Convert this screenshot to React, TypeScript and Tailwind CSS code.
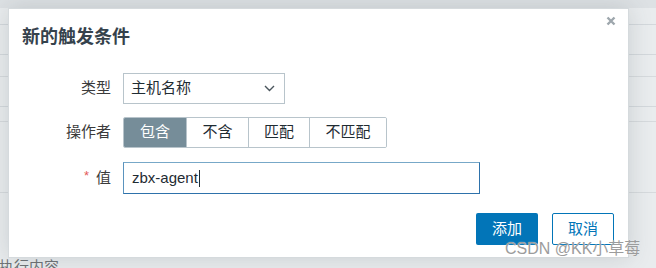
import React from "react";

const font = "font-['Liberation_Sans','Noto_Sans_CJK_SC',sans-serif]";

export default function App() {
  const segs = [
    { t: "包含", w: "w-[62px]", active: true },
    { t: "不含", w: "w-[62px]", active: false },
    { t: "匹配", w: "w-[61px]", active: false },
    { t: "不匹配", w: "w-[77px]", active: false },
  ];
  return (
    <div className={`relative w-[656px] h-[268px] overflow-hidden bg-[#e9ecee] ${font}`}>
      {/* background page (dimmed) */}
      <div className="flex flex-col">
        <div className="h-[8px] bg-[#dde1e4]" />
        <div className="h-[17px] border-b border-[#d3d8dc]" />
        <div className="h-[30px] border-b border-[#d3d8dc]" />
        <div className="h-[22px] border-b border-[#d6dadd]" />
        <div className="h-[30px] border-b border-[#d3d8dc]" />
        <div className="h-[15px] border-b border-[#d6dadd]" />
        <div className="h-[71px] border-b border-[#d6dadd]" />
        <div className="h-[64px]" />
        <div className="-ml-[1px] text-[15px] leading-[20px] text-[#6e7275]">执行内容</div>
      </div>

      {/* dialog */}
      <div className="absolute left-[8px] top-[8px] w-[621px] h-[250px] bg-white border border-[#d5dadd] shadow-[0_0_22px_rgba(60,70,80,0.18)] px-[13px] pt-[16px]">
        <button className="absolute right-[12px] top-[7px] w-[10px] h-[10px] flex items-center justify-center">
          <svg width="10" height="10" viewBox="0 0 10 10">
            <path d="M1.5 1.5 L8.5 8.5 M8.5 1.5 L1.5 8.5" stroke="#9ea7ad" strokeWidth="2.4" />
          </svg>
        </button>

        <div className="text-[18px] leading-[24px] font-bold text-[#35424c]">新的触发条件</div>

        <div className="mt-[24px] flex flex-col gap-[13px]">
          <div className="flex items-center gap-[12px] h-[31px]">
            <div className="w-[89px] text-right text-[15px] text-[#3b3b3b]">类型</div>
            <div className="w-[162px] h-[31px] border border-[#b8c4cb] flex items-center justify-between pl-[7px] pr-[9px] text-[15px] text-[#1f2c33]">
              <span>主机名称</span>
              <svg width="11" height="7" viewBox="0 0 11 7">
                <path d="M1 1 L5.5 5.5 L10 1" fill="none" stroke="#4a555c" strokeWidth="1.4" />
              </svg>
            </div>
          </div>

          <div className="flex items-center gap-[12px] h-[31px]">
            <div className="w-[89px] text-right text-[15px] text-[#3b3b3b]">操作者</div>
            <div className="flex h-[31px] rounded-[2px] border border-[#b8c4cb] overflow-hidden">
              {segs.map((s, i) => (
                <div
                  key={s.t}
                  className={`${s.w} flex items-center justify-center text-[15px] ${
                    s.active ? "bg-[#768d99] text-white" : "bg-white text-[#1f2c33]"
                  } ${i > 0 ? "border-l border-[#b8c4cb]" : ""}`}
                >
                  {s.t}
                </div>
              ))}
            </div>
          </div>

          <div className="flex items-center gap-[12px] h-[32px] mt-[1px]">
            <div className="w-[89px] flex justify-end items-center text-[15px] text-[#3b3b3b]">
              <span className="text-[#e45959] text-[13px] leading-none relative -top-[3px] mr-[7px]">*</span>
              <span>值</span>
            </div>
            <div className="w-[357px] h-[32px] border border-[#2e72ab] border-t-[#77a8c8] border-l-[#5a93be] flex items-center pl-[8px] text-[15px] text-[#1f2c33]">
              <span>zbx-agent</span>
              <span className="w-[1px] h-[17px] bg-[#1f2c33] ml-[1px]" />
            </div>
          </div>
        </div>

        <div className="mt-[19px] flex justify-end gap-[14px] pr-[1px]">
          <button className="w-[62px] h-[32px] rounded-[2px] bg-[#0275b8] text-white text-[15px]">添加</button>
          <button className="w-[62px] h-[32px] rounded-[2px] bg-white border border-[#0275b8] text-[#0275b8] text-[15px]">取消</button>
        </div>
      </div>

      {/* watermark */}
      <div className="absolute left-[505px] top-[240px] text-[16px] leading-[18px] text-[#9c9c9c] [text-shadow:0_0_1px_rgba(255,255,255,0.9)]">
        CSDN @KK小草莓
      </div>
    </div>
  );
}
